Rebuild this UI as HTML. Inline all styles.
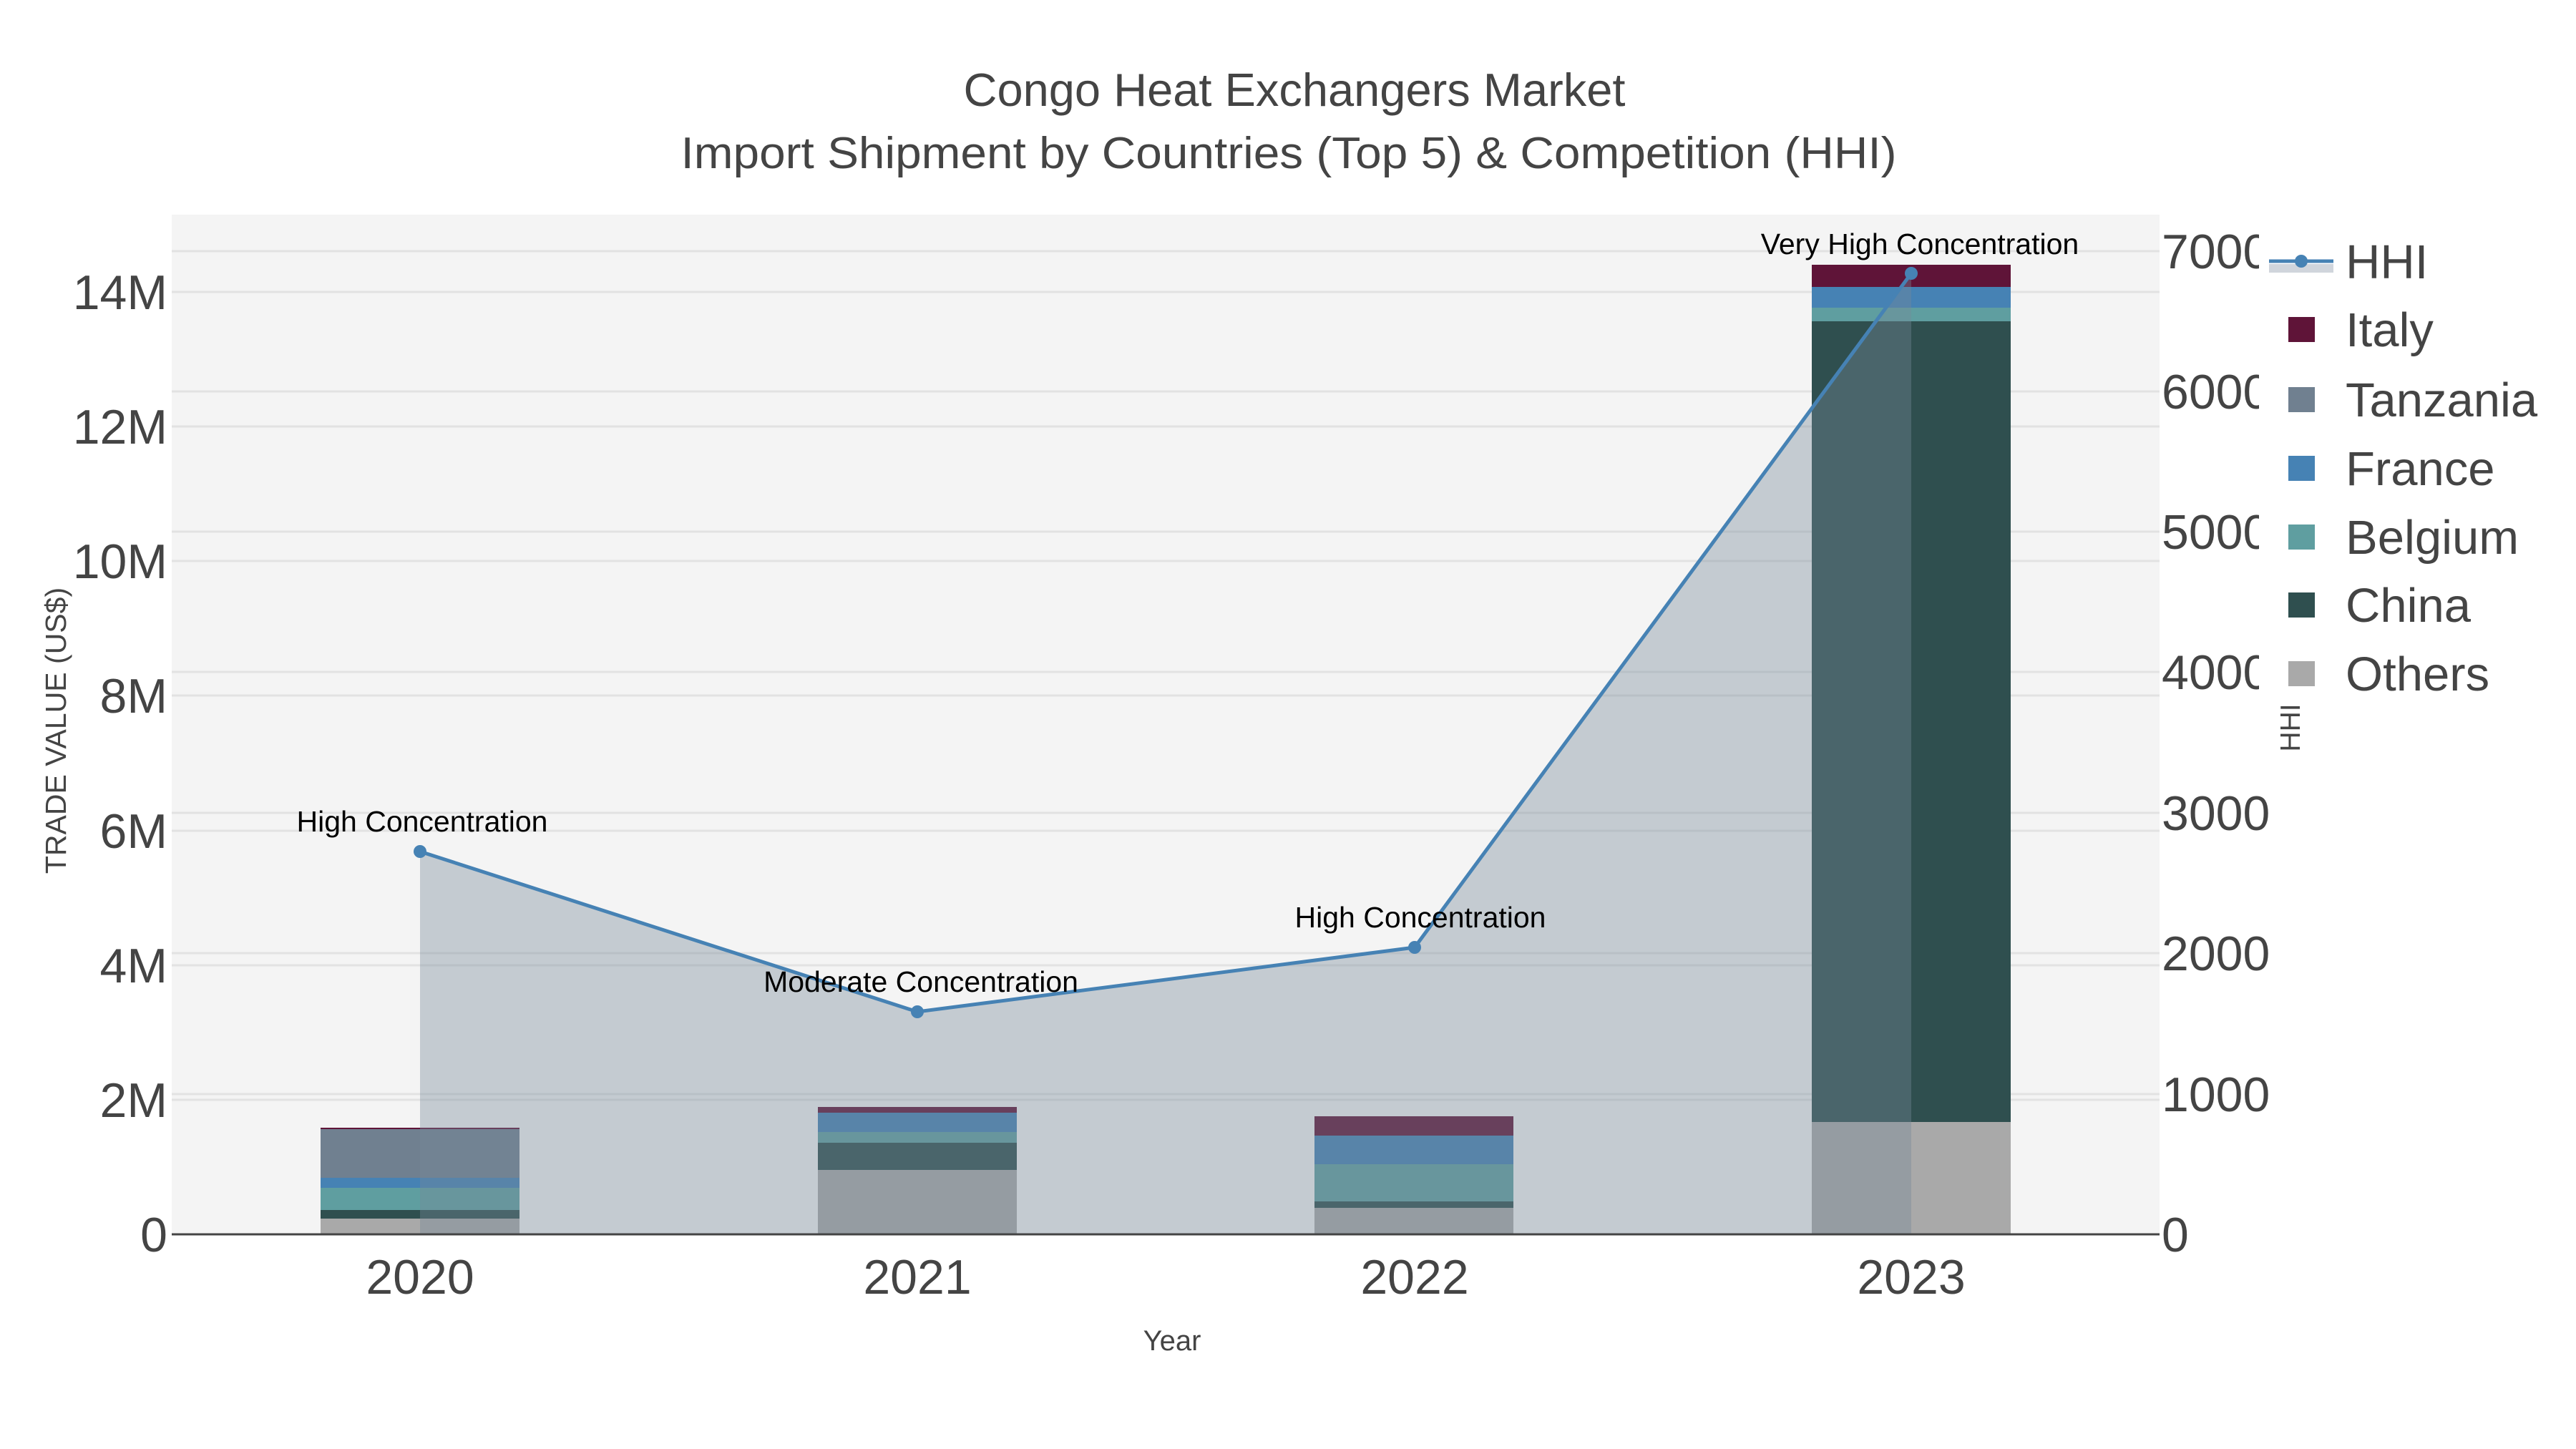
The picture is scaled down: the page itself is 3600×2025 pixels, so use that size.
<!DOCTYPE html>
<html><head><meta charset="utf-8"><style>html,body{margin:0;padding:0;background:#fff}svg{display:block}text{font-family:"Liberation Sans",Arial,sans-serif}</style></head>
<body>
<svg width="3600" height="2025" viewBox="0 0 3600 2025" xmlns="http://www.w3.org/2000/svg">
<rect width="3600" height="2025" fill="#fff"/>
<rect x="240" y="300" width="2778" height="1425" fill="#f4f4f4"/>
<g stroke="#e2e2e2" stroke-width="3">
<line x1="240" x2="3018" y1="1537" y2="1537"/><line x1="240" x2="3018" y1="1349" y2="1349"/>
<line x1="240" x2="3018" y1="1161" y2="1161"/><line x1="240" x2="3018" y1="972" y2="972"/>
<line x1="240" x2="3018" y1="784" y2="784"/><line x1="240" x2="3018" y1="596" y2="596"/>
<line x1="240" x2="3018" y1="408" y2="408"/>
<line x1="240" x2="3018" y1="1529" y2="1529"/><line x1="240" x2="3018" y1="1332" y2="1332"/>
<line x1="240" x2="3018" y1="1136" y2="1136"/><line x1="240" x2="3018" y1="939" y2="939"/>
<line x1="240" x2="3018" y1="743" y2="743"/><line x1="240" x2="3018" y1="547" y2="547"/>
<line x1="240" x2="3018" y1="351" y2="351"/>
</g>
<g>
<rect x="448" y="1576" width="278" height="3" fill="#5f1438"/>
<rect x="448" y="1578" width="278" height="68" fill="#708090"/>
<rect x="448" y="1646" width="278" height="14" fill="#4682b4"/>
<rect x="448" y="1660" width="278" height="31" fill="#5f9ea0"/>
<rect x="448" y="1691" width="278" height="12" fill="#2f4f4f"/>
<rect x="448" y="1703" width="278" height="22" fill="#a9a9a9"/>

<rect x="1143" y="1547" width="278" height="8" fill="#5f1438"/>
<rect x="1143" y="1555" width="278" height="27" fill="#4682b4"/>
<rect x="1143" y="1582" width="278" height="15" fill="#5f9ea0"/>
<rect x="1143" y="1597" width="278" height="38" fill="#2f4f4f"/>
<rect x="1143" y="1635" width="278" height="90" fill="#a9a9a9"/>

<rect x="1837" y="1560" width="278" height="27" fill="#5f1438"/>
<rect x="1837" y="1587" width="278" height="40" fill="#4682b4"/>
<rect x="1837" y="1627" width="278" height="52" fill="#5f9ea0"/>
<rect x="1837" y="1679" width="278" height="9" fill="#2f4f4f"/>
<rect x="1837" y="1688" width="278" height="37" fill="#a9a9a9"/>

<rect x="2532" y="370" width="278" height="31" fill="#5f1438"/>
<rect x="2532" y="401" width="278" height="29" fill="#4682b4"/>
<rect x="2532" y="430" width="278" height="19" fill="#5f9ea0"/>
<rect x="2532" y="449" width="278" height="1119" fill="#2f4f4f"/>
<rect x="2532" y="1568" width="278" height="157" fill="#a9a9a9"/>
</g>
<polygon points="587,1725 587,1190 1282,1414 1977,1324 2671,382 2671,1725" fill="rgba(119,136,153,0.38)"/>
<line x1="240" x2="3018" y1="1725" y2="1725" stroke="#444" stroke-width="3"/>
<polyline points="587,1190 1282,1414 1977,1324 2671,382" fill="none" stroke="#4682b4" stroke-width="5"/>
<g fill="#4682b4"><circle cx="587" cy="1190" r="9"/><circle cx="1282" cy="1414" r="9"/><circle cx="1977" cy="1324" r="9"/><circle cx="2671" cy="382" r="9"/></g>
<g font-size="41" fill="#000" text-anchor="middle">
<text x="590" y="1162">High Concentration</text>
<text x="1287" y="1386">Moderate Concentration</text>
<text x="1985" y="1296">High Concentration</text>
<text x="2683" y="355">Very High Concentration</text>
</g>
<g font-size="68" fill="#444" text-anchor="end">
<text x="234" y="1749">0</text><text x="234" y="1561">2M</text><text x="234" y="1373">4M</text>
<text x="234" y="1185">6M</text><text x="234" y="996">8M</text><text x="234" y="808">10M</text>
<text x="234" y="620">12M</text><text x="234" y="432">14M</text>
</g>
<g font-size="68" fill="#444">
<text x="3021" y="1749">0</text><text x="3021" y="1553">1000</text><text x="3021" y="1356">2000</text>
<text x="3021" y="1160">3000</text><text x="3021" y="963">4000</text><text x="3021" y="767">5000</text>
<text x="3021" y="571">6000</text><text x="3021" y="375">7000</text>
</g>
<rect x="3157" y="320" width="443" height="670" fill="#fff"/>
<rect x="3171" y="369" width="90" height="12" fill="#d0d5dc"/>
<line x1="3171" x2="3261" y1="365" y2="365" stroke="#4682b4" stroke-width="5"/>
<circle cx="3216" cy="365" r="9" fill="#4682b4"/>
<g font-size="67" fill="#444">
<text x="3278" y="389">HHI</text><text x="3278" y="484">Italy</text><text x="3278" y="582">Tanzania</text>
<text x="3278" y="678">France</text><text x="3278" y="774">Belgium</text><text x="3278" y="869">China</text>
<text x="3278" y="965">Others</text>
</g>
<rect x="3198" y="443" width="37" height="35" fill="#5f1438"/>
<rect x="3198" y="541" width="37" height="35" fill="#708090"/>
<rect x="3198" y="637" width="37" height="35" fill="#4682b4"/>
<rect x="3198" y="733" width="37" height="35" fill="#5f9ea0"/>
<rect x="3198" y="828" width="37" height="35" fill="#2f4f4f"/>
<rect x="3198" y="924" width="37" height="35" fill="#a9a9a9"/>
<text transform="translate(3214,1017) rotate(-90)" font-size="39" fill="#444" text-anchor="middle">HHI</text>
<g font-size="68" fill="#444" text-anchor="middle">
<text x="587" y="1808">2020</text><text x="1282" y="1808">2021</text><text x="1977" y="1808">2022</text><text x="2671" y="1808">2023</text>
</g>
<text x="1638" y="1887" font-size="40" fill="#444" text-anchor="middle">Year</text>
<text transform="translate(92,1021) rotate(-90)" font-size="41" fill="#444" text-anchor="middle">TRADE VALUE (US$)</text>
<g fill="#444" text-anchor="middle">
<text x="1809" y="148" font-size="65">Congo Heat Exchangers Market</text>
<text x="1801" y="235" font-size="62" textLength="1699" lengthAdjust="spacingAndGlyphs">Import Shipment by Countries (Top 5) &amp; Competition (HHI)</text>
</g>
</svg>
</body></html>
